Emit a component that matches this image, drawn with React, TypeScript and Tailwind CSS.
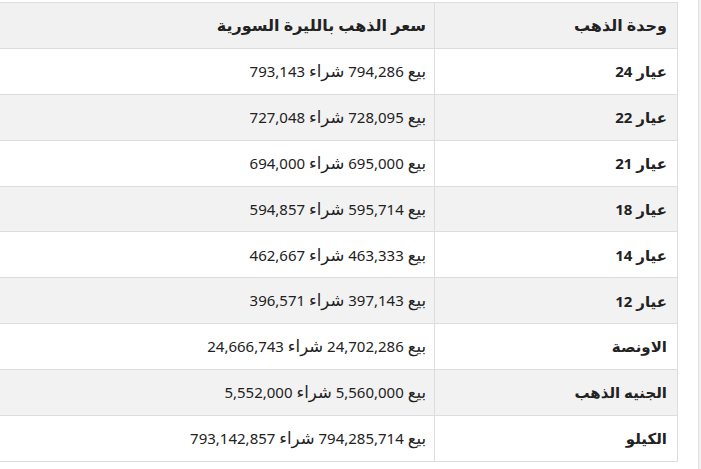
import React from "react";

const rows: [string, string, string][] = [
  ["عيار 24", "794,286", "793,143"],
  ["عيار 22", "728,095", "727,048"],
  ["عيار 21", "695,000", "694,000"],
  ["عيار 18", "595,714", "594,857"],
  ["عيار 14", "463,333", "462,667"],
  ["عيار 12", "397,143", "396,571"],
  ["الاونصة", "24,702,286", "24,666,743"],
  ["الجنيه الذهب", "5,560,000", "5,552,000"],
  ["الكيلو", "794,285,714", "793,142,857"],
];

export default function App() {
  return (
    <div className="flex h-[469px] w-[701px] overflow-hidden bg-white">
      <div
        dir="rtl"
        className="flex-1 overflow-hidden pt-[2px] pr-[20px]"
        style={{ fontFamily: '"Noto Sans", "DejaVu Sans", sans-serif' }}
      >
        <table className="w-[760px] border-collapse text-[15px] text-[#222]">
          <thead>
            <tr className="h-[45.9px] bg-[#f1f1f1]">
              <th className="w-[243px] border border-[#dddddd] pr-[10px] text-right align-middle text-[16px] font-bold">
                وحدة الذهب
              </th>
              <th className="border border-[#dddddd] pr-[8px] text-right align-middle text-[16px] font-bold">
                سعر الذهب بالليرة السورية
              </th>
            </tr>
          </thead>
          <tbody>
            {rows.map(([unit, sell, buy], i) => (
              <tr
                key={unit}
                className={i % 2 === 1 ? "h-[45.9px] bg-[#f2f2f2]" : "h-[45.9px] bg-white"}
              >
                <td className="border border-[#dddddd] pr-[10px] text-right align-middle font-bold">
                  {unit}
                </td>
                <td className="border border-[#dddddd] pr-[8px] text-right align-middle">
                  <span className="text-[16.5px]">بيع</span> {sell}{" "}
                  <span className="text-[16.5px]">شراء</span> {buy}
                </td>
              </tr>
            ))}
          </tbody>
        </table>
      </div>
      <div className="h-full w-[3px] border-l border-[#e2e2e2] bg-[#f1f1f1]" />
    </div>
  );
}
